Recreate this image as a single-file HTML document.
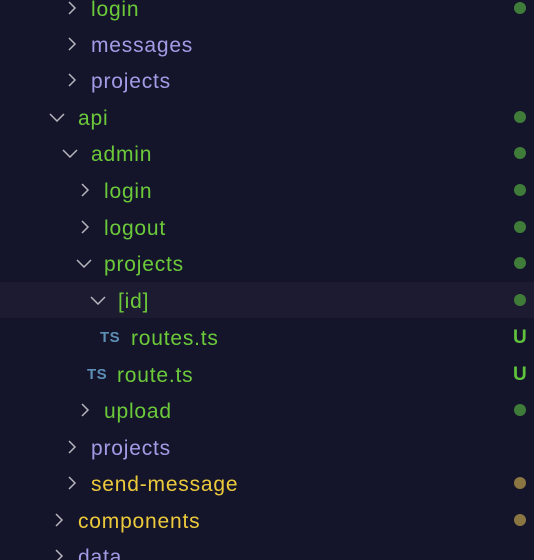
<!DOCTYPE html>
<html><head><meta charset="utf-8"><style>
html,body{margin:0;padding:0;width:534px;height:560px;overflow:hidden;background:#14152a;}
body{position:relative;font-family:"Liberation Sans",sans-serif;}
.hl{position:absolute;left:0;top:282px;width:534px;height:36px;background:#1c1b31;}
.r{position:absolute;left:0;width:534px;height:36px;}
.t{position:absolute;top:2px;line-height:36px;font-size:21px;letter-spacing:0.8px;white-space:nowrap;}
.c{position:absolute;top:11px;}
.ts{position:absolute;top:1px;line-height:36px;font-size:15px;font-weight:bold;color:#5d8fb5;letter-spacing:0.5px;}
.d{position:absolute;left:514px;top:12px;width:12px;height:12px;border-radius:50%;}
.u{position:absolute;left:513px;top:1px;line-height:36px;font-size:19px;font-weight:bold;color:#5fc23c;}
.g{color:#6cca3a}.p{color:#a39be6}.y{color:#ecca3c}
</style></head><body>
<div class="hl"></div>
<div class="r" style="top:-10px"><svg class="c" style="left:66px" width="12" height="14"><path d="M3 1 L9 7 L3 13" stroke="#b5b5bd" stroke-width="1.5" fill="none"/></svg><span class="t g" style="left:91px">login</span><span class="d" style="background:#3f7c39"></span></div>
<div class="r" style="top:26px"><svg class="c" style="left:66px" width="12" height="14"><path d="M3 1 L9 7 L3 13" stroke="#b5b5bd" stroke-width="1.5" fill="none"/></svg><span class="t p" style="left:91px">messages</span></div>
<div class="r" style="top:62px"><svg class="c" style="left:66px" width="12" height="14"><path d="M3 1 L9 7 L3 13" stroke="#b5b5bd" stroke-width="1.5" fill="none"/></svg><span class="t p" style="left:91px">projects</span></div>
<div class="r" style="top:99px"><svg class="c" style="left:49px;top:13px" width="16" height="10"><path d="M1 2 L8 9 L15 2" stroke="#b5b5bd" stroke-width="1.5" fill="none"/></svg><span class="t g" style="left:78px">api</span><span class="d" style="background:#3f7c39"></span></div>
<div class="r" style="top:135px"><svg class="c" style="left:62px;top:13px" width="16" height="10"><path d="M1 2 L8 9 L15 2" stroke="#b5b5bd" stroke-width="1.5" fill="none"/></svg><span class="t g" style="left:91px">admin</span><span class="d" style="background:#3f7c39"></span></div>
<div class="r" style="top:172px"><svg class="c" style="left:79px" width="12" height="14"><path d="M3 1 L9 7 L3 13" stroke="#b5b5bd" stroke-width="1.5" fill="none"/></svg><span class="t g" style="left:104px">login</span><span class="d" style="background:#3f7c39"></span></div>
<div class="r" style="top:209px"><svg class="c" style="left:79px" width="12" height="14"><path d="M3 1 L9 7 L3 13" stroke="#b5b5bd" stroke-width="1.5" fill="none"/></svg><span class="t g" style="left:104px">logout</span><span class="d" style="background:#3f7c39"></span></div>
<div class="r" style="top:245px"><svg class="c" style="left:76px;top:13px" width="16" height="10"><path d="M1 2 L8 9 L15 2" stroke="#b5b5bd" stroke-width="1.5" fill="none"/></svg><span class="t g" style="left:104px">projects</span><span class="d" style="background:#3f7c39"></span></div>
<div class="r" style="top:282px"><svg class="c" style="left:90px;top:13px" width="16" height="10"><path d="M1 2 L8 9 L15 2" stroke="#b5b5bd" stroke-width="1.5" fill="none"/></svg><span class="t g" style="left:118px">[id]</span><span class="d" style="background:#3f7c39"></span></div>
<div class="r" style="top:319px"><span class="ts" style="left:100px">TS</span><span class="t g" style="left:131px">routes.ts</span><span class="u">U</span></div>
<div class="r" style="top:356px"><span class="ts" style="left:87px">TS</span><span class="t g" style="left:117px">route.ts</span><span class="u">U</span></div>
<div class="r" style="top:392px"><svg class="c" style="left:79px" width="12" height="14"><path d="M3 1 L9 7 L3 13" stroke="#b5b5bd" stroke-width="1.5" fill="none"/></svg><span class="t g" style="left:104px">upload</span><span class="d" style="background:#3f7c39"></span></div>
<div class="r" style="top:429px"><svg class="c" style="left:66px" width="12" height="14"><path d="M3 1 L9 7 L3 13" stroke="#b5b5bd" stroke-width="1.5" fill="none"/></svg><span class="t p" style="left:91px">projects</span></div>
<div class="r" style="top:465px"><svg class="c" style="left:66px" width="12" height="14"><path d="M3 1 L9 7 L3 13" stroke="#b5b5bd" stroke-width="1.5" fill="none"/></svg><span class="t y" style="left:91px">send-message</span><span class="d" style="background:#8b7541"></span></div>
<div class="r" style="top:502px"><svg class="c" style="left:53px" width="12" height="14"><path d="M3 1 L9 7 L3 13" stroke="#b5b5bd" stroke-width="1.5" fill="none"/></svg><span class="t y" style="left:78px">components</span><span class="d" style="background:#8b7541"></span></div>
<div class="r" style="top:538px"><svg class="c" style="left:53px" width="12" height="14"><path d="M3 1 L9 7 L3 13" stroke="#b5b5bd" stroke-width="1.5" fill="none"/></svg><span class="t p" style="left:78px">data</span></div>
</body></html>
